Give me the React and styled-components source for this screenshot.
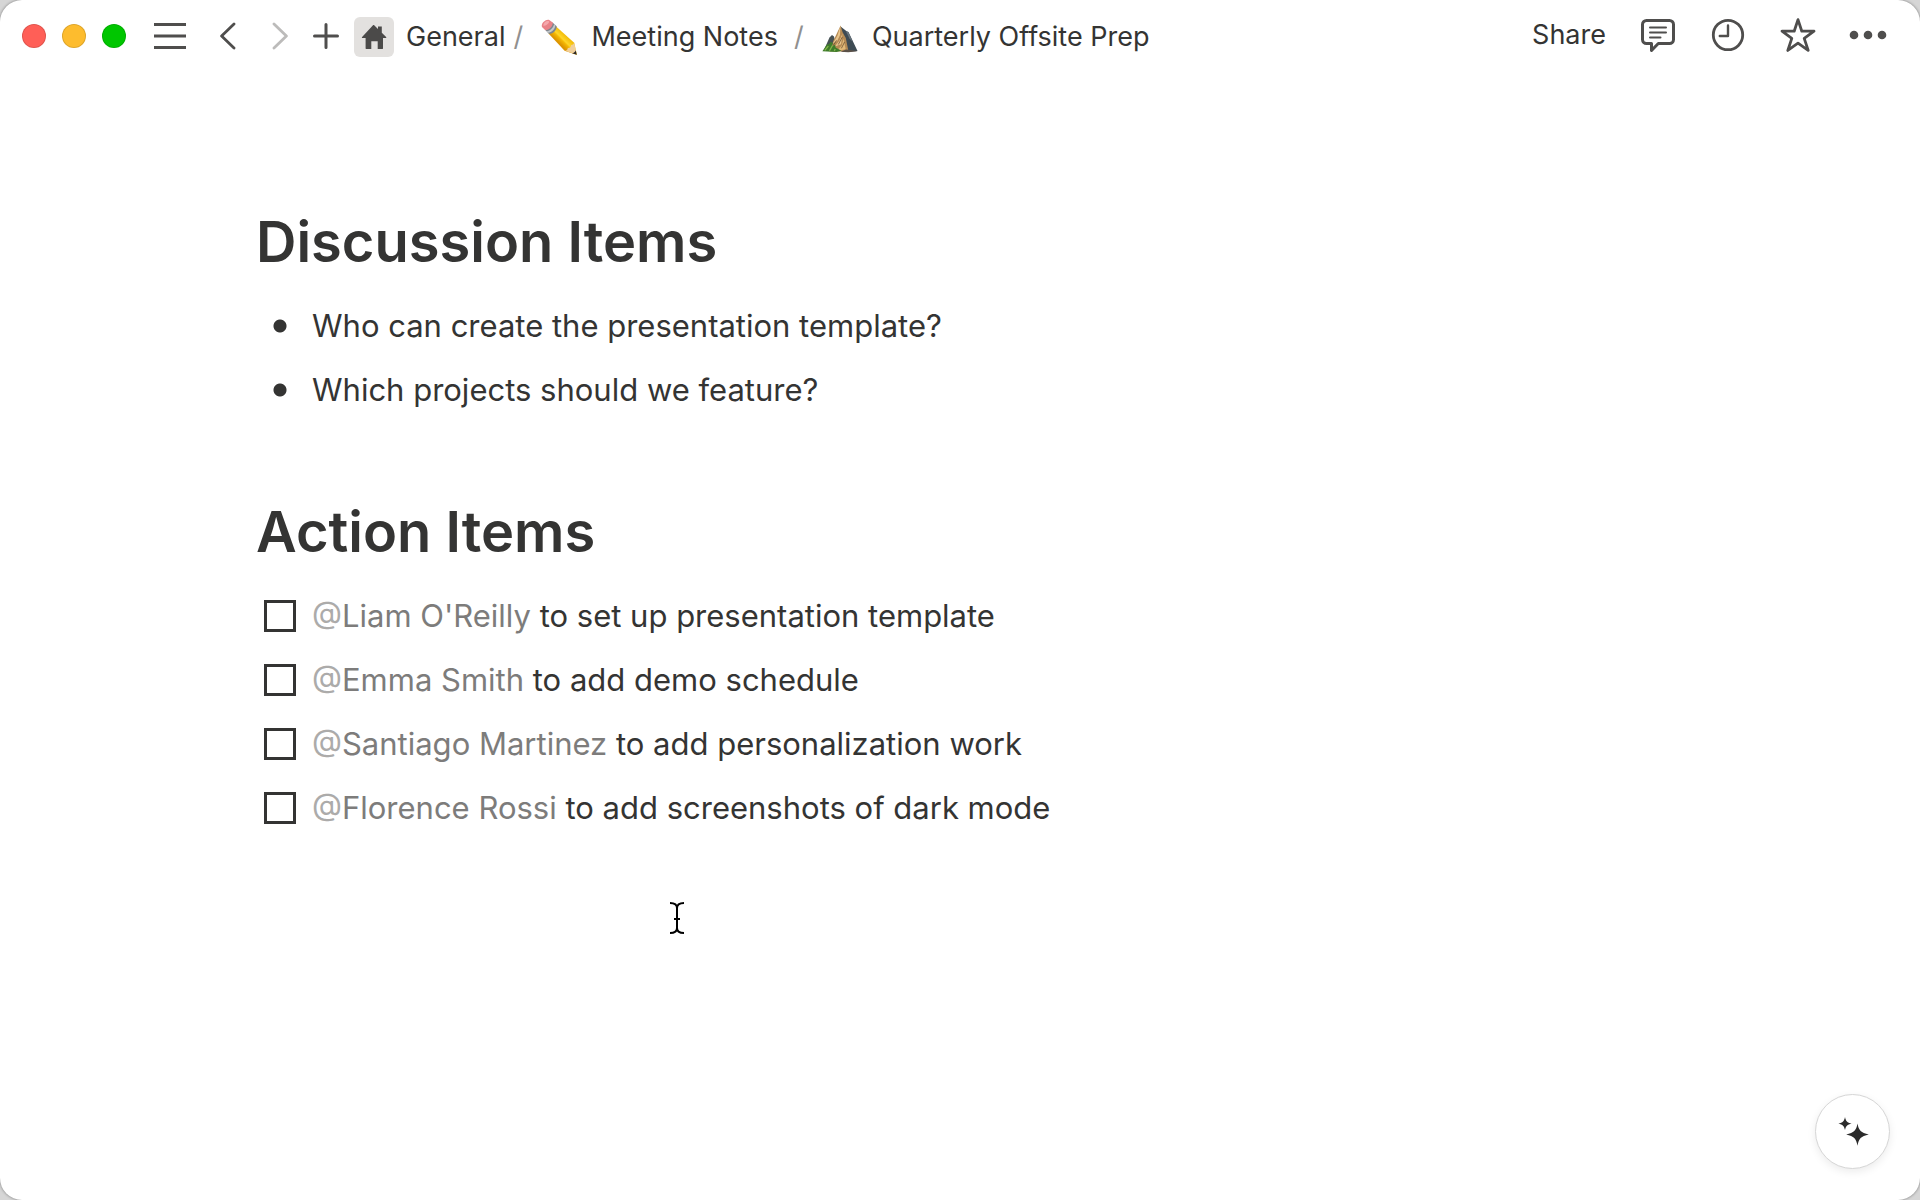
import { useState } from 'react'
import styled, { createGlobalStyle } from 'styled-components'

const GlobalStyle = createGlobalStyle`
  * { box-sizing: border-box; }

  :root {
    --text: #343433;
    --icon: #4f4e4d;
    --muted: #7d7c7b;
    --faint: #acabaa;
  }

  html, body, #root { height: 100%; }

  body {
    margin: 0;
    background: #d6d6d6;
    color: var(--text);
    font-family: 'Inter', sans-serif;
    overflow: hidden;
  }
`

const Window = styled.div`
  position: relative;
  height: 100%;
  display: flex;
  flex-direction: column;
  background: #fff;
  border-radius: 22px;
  box-shadow: 0 0 3px rgba(0, 0, 0, 0.45);
  overflow: hidden;
`

/* ── Top bar ─────────────────────────────────────────────────── */
const TopBar = styled.header`
  display: flex;
  align-items: center;
  height: 72px;
  padding: 0 28px 0 22px;
  flex-shrink: 0;
`

const TrafficLights = styled.div`
  display: flex;
  gap: 16px;
  margin-right: 20px;
`

const Light = styled.button`
  width: 24px;
  height: 24px;
  padding: 0;
  border: 1px solid rgba(0, 0, 0, 0.12);
  border-radius: 50%;
  background: ${({ $color }) => $color};
`

const IconButton = styled.button`
  display: flex;
  align-items: center;
  justify-content: center;
  width: ${({ $width }) => $width || 48}px;
  height: 48px;
  padding: 0;
  border: 0;
  background: transparent;
  color: ${({ disabled }) => (disabled ? '#bcbbba' : 'var(--icon)')};

  svg { display: block; flex-shrink: 0; }
`

const Breadcrumbs = styled.nav`
  display: flex;
  align-items: center;
  margin-right: auto;
  padding-top: 2px;
  font-size: 27px;
  line-height: 40px;
  white-space: nowrap;
`

const Crumb = styled.a`
  display: flex;
  align-items: center;
  gap: ${({ $gap }) => $gap}px;
  color: inherit;
  text-decoration: none;
`

const HomeTile = styled.span`
  display: flex;
  align-items: center;
  justify-content: center;
  width: 40px;
  height: 40px;
  border-radius: 6px;
  background: #e3e1df;
  color: #4b4a49;
`

const Slash = styled.span`
  width: 10px;
  margin: 0 18px 0 ${({ $tight }) => ($tight ? 8 : 16)}px;
  color: #91908f;
`

const Actions = styled.div`
  display: flex;
  align-items: center;
  gap: 22px;
  padding-bottom: 2px;
`

const ShareButton = styled.button`
  padding: 0;
  border: 0;
  margin-right: 6px;
  background: transparent;
  color: var(--text);
  font-family: inherit;
  font-size: 27px;
  line-height: 40px;
`

/* ── Document ────────────────────────────────────────────────── */
const Page = styled.main`
  flex: 1;
  padding: 133px 256px 0;
`

const Section = styled.section`
  margin-bottom: 73px;
`

const Heading = styled.h1`
  margin: 0 0 15px;
  font-size: 56px;
  font-weight: 600;
  line-height: 74px;
`

const List = styled.ul`
  margin: 0;
  padding: 0;
  list-style: none;
`

const Row = styled.li`
  display: flex;
  align-items: center;
  gap: 16px;
  height: 64px;
  padding-left: 8px;
  font-size: 31px;
  line-height: 48px;
  white-space: nowrap;
`

const Bullet = styled.span`
  width: 32px;
  height: 14px;
  background: radial-gradient(circle, var(--text) 6px, transparent 7px);
`

const Checkbox = styled.input`
  appearance: none;
  width: 32px;
  height: 32px;
  margin: 0;
  border: 3px solid var(--text);
  background: #fff;

  &:checked { background: #2383e2; border-color: #2383e2; }
`

const Mention = styled.span`
  color: var(--muted);
`

const At = styled.span`
  color: var(--faint);
`

/* ── Floating bits ───────────────────────────────────────────── */
const AssistantButton = styled.button`
  position: absolute;
  right: 30px;
  bottom: 31px;
  display: flex;
  align-items: center;
  justify-content: center;
  width: 75px;
  height: 75px;
  padding: 0;
  border: 1px solid #d6d6d6;
  border-radius: 50%;
  background: #fff;
  box-shadow: 0 3px 8px rgba(0, 0, 0, 0.08);
  color: #2b2b2b;
`

const TextCursor = styled.svg`
  position: absolute;
  left: 669px;
  top: 902px;
  pointer-events: none;
`

const stroke = {
  fill: 'none',
  stroke: 'currentColor',
  strokeLinecap: 'round',
  strokeLinejoin: 'round',
}

const MenuIcon = () => (
  <svg width="32" height="28" viewBox="0 0 32 28" {...stroke} strokeLinecap="butt" strokeWidth="3">
    <path d="M0 2.5h32M0 14h32M0 25.5h32" />
  </svg>
)

const ChevronIcon = ({ flip }) => (
  <svg width="16" height="28" viewBox="0 0 16 28" {...stroke} strokeWidth="2.8">
    <path d={flip ? 'M2 2l12.4 12L2 26' : 'M14 2L1.6 14 14 26'} />
  </svg>
)

const PlusIcon = () => (
  <svg width="28" height="28" viewBox="0 0 28 28" {...stroke} strokeWidth="3">
    <path d="M14 2.5v23M2.5 14h23" />
  </svg>
)

const HomeIcon = () => (
  <svg width="26" height="26" viewBox="0 0 26 26" fill="currentColor">
    <path d="M13.2 1.2L17 5V2.6h3.8v6.1l4.3 4.2c.4.4.2 1.1-.4 1.1H22v10.6c0 .3-.2.5-.5.5h-4.8v-7.9h-6.4v7.9H5.1c-.3 0-.5-.2-.5-.5V14H1.5c-.6 0-.8-.7-.4-1.1L12 1.2c.4-.3.8-.3 1.2 0z" />
  </svg>
)

const PencilIcon = () => (
  <svg width="36" height="36" viewBox="0 0 36 36">
    <defs>
      <linearGradient id="pencilBody" x1="22" y1="14" x2="15" y2="21" gradientUnits="userSpaceOnUse">
        <stop offset="0" stopColor="#f3bd0b" />
        <stop offset="0.45" stopColor="#ffd62a" />
        <stop offset="0.6" stopColor="#f4b704" />
        <stop offset="1" stopColor="#dc9400" />
      </linearGradient>
    </defs>
    <path d="M7.5 14.5L14.8 7.2 33.2 23.7 36 36 23.6 31.8z" fill="url(#pencilBody)" />
    <path d="M33.1 23.6L35.7 35.6 23.7 31.8c1.8-.1 3-1.1 3.1-2.9 2.4 0 3.4-1.1 3.3-3 1.7.1 2.8-.7 3-2.3z" fill="#f0cf9b" />
    <path d="M34.7 31.2l1.1 4.6-4.8-1.5c1.9-.3 3.2-1.3 3.7-3.1z" fill="#292725" />
    <path d="M4.1 10.8L11.5 3.5l4.2 3.8c.2 3.6-3.5 7.5-7.6 7.7z" fill="#7d858d" />
    <path d="M5.6 12.3c3.7-.5 6.9-3.7 7.5-7.3l1.3 1.2c-.3 3.7-3.5 7.1-7.4 7.5z" fill="#c3c7cb" />
    <path d="M1.2 8.2C-.9 5.2 4.6-.4 8.2 1l3.6 2.6c.1 3.7-3.5 7.4-7.4 7.6z" fill="#e98288" />
    <path d="M2.2 6.5C2.6 3.6 5.1 1.6 7.6 2.1c2 .9-2.2 5.5-5.4 4.4z" fill="#f5a8ac" />
  </svg>
)

const MountainIcon = () => (
  <svg width="36" height="36" viewBox="0 0 36 36">
    <path d="M2 31l5.5-12.5L10 16l2 1.6 3.5 12.9z" fill="#465154" />
    <path d="M18.6 7.5l5.7 4.4 2.2 1.2L35.5 32 21 33z" fill="#3e4b54" />
    <path d="M23.8 12l2.7 1.2 4.2 9.6-3.3-3.3z" fill="#68747d" />
    <path d="M18.6 6.5l2 6.7 3.2 5.7 2.7 13.7-18.8-.1 3.8-11.1z" fill="#b58a54" />
    <path d="M18.4 7l-2.9 9.4-4.7 8 4.4-2.3L18 16zM20.5 14.5l-3 7-4.7 6 6.2-2.3z" fill="#e9c58c" />
    <path d="M21.5 19.7l-1.7 6.8-5 5.4 8.9-1.6z" fill="#e2b978" />
    <path d="M14.5 21.4l-3.3 5.2M20.3 18l-4 7.5M22.6 23l-3.2 6.3" stroke="#6d5234" strokeWidth=".8" />
    <path d="M.4 32.2l4.3-6.5 2.5-.7 1.3-2.3 2.5 1.5-1.5 3.2 3.6-1.6.5 2.6 5.8 3.3-4.9 1.3z" fill="#3f7c2b" />
    <path d="M2.8 31.4l3.5-4.2M7.5 31.8l3-5.3M12.3 32l.9-2" stroke="#84b64a" strokeWidth="1.3" />
    <path d="M18.5 32.7l5.6-2.2 11.4 1.6c-4.5 1.3-11 1.3-17 .6z" fill="#5b5148" />
  </svg>
)

const CommentIcon = () => (
  <svg width="36" height="36" viewBox="0 0 36 36" {...stroke} strokeWidth="3">
    <path d="M6.5 3.5h23a4 4 0 0 1 4 4v15a4 4 0 0 1-4 4H18.300L11.500 33.500v-7h-5a4 4 0 0 1-4-4v-15a4 4 0 0 1 4-4z" />
    <path d="M10 10.500h16M10 15.500h16M10 20.500h10.500" strokeWidth="2" />
  </svg>
)

const ClockIcon = () => (
  <svg width="36" height="36" viewBox="0 0 36 36" {...stroke}>
    <circle cx="18" cy="18" r="14.7" strokeWidth="2.8" />
    <path d="M18 8.5V19H9.800" strokeWidth="2.4" />
  </svg>
)

const StarIcon = () => (
  <svg width="36" height="36" viewBox="0 0 36 36" {...stroke} strokeWidth="2.8">
    <path d="M18 2.600l3.800 11.600H34L24.200 21.400l4 12L18 26.200 7.800 33.400l4-12L2 14.200h12.200z" />
  </svg>
)

const DotsIcon = () => (
  <svg width="38" height="12" viewBox="0 0 38 12" fill="currentColor">
    <circle cx="5" cy="6" r="4.3" />
    <circle cx="19" cy="6" r="4.3" />
    <circle cx="33" cy="6" r="4.3" />
  </svg>
)

const SparkleIcon = () => (
  <svg width="32" height="32" viewBox="0 0 32 32" fill="currentColor">
    <path d="M20.500 7.500c1.300 7 3.400 9.300 11.300 11-7.900 1.700-10 4-11.300 11.300-1.300-7.300-3.400-9.600-11.300-11.300 7.900-1.700 10-4 11.300-11z" />
    <path d="M8 .9c.8 4.100 2.200 5.600 6.600 6.600-4.400 1-5.800 2.500-6.600 6.600C7.200 10 5.800 8.500 1.400 7.500 5.800 6.500 7.200 5 8 .9z" />
  </svg>
)

const discussion = [
  'Who can create the presentation template?',
  'Which projects should we feature?',
]

const actionItems = [
  { id: 'liam', who: "Liam O'Reilly", task: 'to set up presentation template' },
  { id: 'emma', who: 'Emma Smith', task: 'to add demo schedule' },
  { id: 'santiago', who: 'Santiago Martinez', task: 'to add personalization work' },
  { id: 'florence', who: 'Florence Rossi', task: 'to add screenshots of dark mode' },
]

export default function App() {
  const [done, setDone] = useState({})

  const toggle = (id) => setDone((prev) => ({ ...prev, [id]: !prev[id] }))

  return (
    <>
      <GlobalStyle />
      <Window>
        <TopBar>
          <TrafficLights>
            <Light $color="#ff5f57" aria-label="Close" />
            <Light $color="#fdbc2e" aria-label="Minimize" />
            <Light $color="#00c600" aria-label="Zoom" />
          </TrafficLights>

          <IconButton $width={48} aria-label="Menu"><MenuIcon /></IconButton>
          <IconButton $width={68} aria-label="Back"><ChevronIcon /></IconButton>
          <IconButton $width={36} aria-label="Forward" disabled><ChevronIcon flip /></IconButton>
          <IconButton $width={56} aria-label="New page"><PlusIcon /></IconButton>

          <Breadcrumbs aria-label="Breadcrumb">
            <Crumb href="#general" $gap={12}>
              <HomeTile><HomeIcon /></HomeTile>
              General
            </Crumb>
            <Slash $tight>/</Slash>
            <Crumb href="#meeting-notes" $gap={14}>
              <PencilIcon />
              Meeting Notes
            </Crumb>
            <Slash>/</Slash>
            <Crumb href="#offsite" $gap={14}>
              <MountainIcon />
              Quarterly Offsite Prep
            </Crumb>
          </Breadcrumbs>

          <Actions>
            <ShareButton>Share</ShareButton>
            <IconButton aria-label="Comments"><CommentIcon /></IconButton>
            <IconButton aria-label="Updates"><ClockIcon /></IconButton>
            <IconButton aria-label="Favorite"><StarIcon /></IconButton>
            <IconButton aria-label="More"><DotsIcon /></IconButton>
          </Actions>
        </TopBar>

        <Page>
          <Section>
            <Heading>Discussion Items</Heading>
            <List>
              {discussion.map((item) => (
                <Row key={item}>
                  <Bullet />
                  <span>{item}</span>
                </Row>
              ))}
            </List>
          </Section>

          <Section>
            <Heading>Action Items</Heading>
            <List>
              {actionItems.map(({ id, who, task }) => (
                <Row key={id}>
                  <Checkbox
                    type="checkbox"
                    id={id}
                    checked={!!done[id]}
                    onChange={() => toggle(id)}
                  />
                  <label htmlFor={id}>
                    <Mention><At>@</At>{who}</Mention> {task}
                  </label>
                </Row>
              ))}
            </List>
          </Section>
        </Page>

        <TextCursor width="16" height="32" viewBox="0 0 16 32" fill="none" stroke="#000" strokeWidth="2">
          <path d="M1 1c4 0 7 1.500 7 5 0-3.500 3-5 7-5M8 5v22M1 31c4 0 7-1.500 7-5 0 3.500 3 5 7 5M5 17h6" />
        </TextCursor>

        <AssistantButton aria-label="Ask AI"><SparkleIcon /></AssistantButton>
      </Window>
    </>
  )
}
